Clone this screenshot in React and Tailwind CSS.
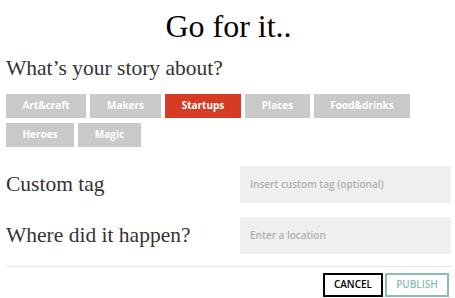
const TAGS_ROW1 = [
  { label: 'Art&craft', w: 'w-[80px]' },
  { label: 'Makers', w: 'w-[71px]' },
  { label: 'Startups', w: 'w-[76px]', active: true },
  { label: 'Places', w: 'w-[65px]' },
  { label: 'Food&drinks', w: 'w-[96px]' },
]

const TAGS_ROW2 = [
  { label: 'Heroes', w: 'w-[68px]' },
  { label: 'Magic', w: 'w-[63px]' },
]

const serif = "font-['Liberation_Serif',serif]"
const sans = "font-['Open_Sans',sans-serif]"

function Tag({ label, w, active }) {
  return (
    <button
      className={`${w} h-[24px] flex items-center justify-center text-[10px] font-bold text-white ${sans} ${
        active ? 'bg-[#d63b24]' : 'bg-[#c9c9c9]'
      }`}
    >
      {label}
    </button>
  )
}

function Field({ label, placeholder }) {
  return (
    <div className="flex items-center justify-between">
      <span className={`${serif} text-[21.5px] text-[#333]`}>{label}</span>
      <div
        className={`w-[211px] h-[37px] bg-[#efefef] flex items-center px-[10px] text-[10px] font-semibold text-[#b0b0b0] ${sans}`}
      >
        {placeholder}
      </div>
    </div>
  )
}

export default function App() {
  return (
    <div className="w-[455px] h-[298px] bg-white pl-[6px] pr-[4px] overflow-hidden">
      <h1 className={`${serif} text-[32px] text-black text-center leading-none pt-[10px]`}>
        Go for it..
      </h1>

      <h2 className={`${serif} text-[21.5px] text-[#333] mt-[16px] leading-none`}>
        What’s your story about?
      </h2>

      <div className="mt-[14px] flex flex-col gap-[5px]">
        <div className="flex gap-[4px]">
          {TAGS_ROW1.map((t) => (
            <Tag key={t.label} {...t} />
          ))}
        </div>
        <div className="flex gap-[4px]">
          {TAGS_ROW2.map((t) => (
            <Tag key={t.label} {...t} />
          ))}
        </div>
      </div>

      <div className="mt-[19px] flex flex-col gap-[14px]">
        <Field label="Custom tag" placeholder="Insert custom tag (optional)" />
        <Field label="Where did it happen?" placeholder="Enter a location" />
      </div>

      <div className="mt-[12px] border-t border-[#e3e3e3]" />

      <div className="mt-[6px] flex justify-end gap-[2px] pr-[2px]">
        <button
          className={`${sans} w-[60px] h-[24px] border-2 border-black text-[10px] font-semibold text-black`}
        >
          CANCEL
        </button>
        <button
          className={`${sans} w-[64px] h-[24px] border-2 border-[#8bbdb6] text-[10px] font-semibold text-[#8bbdb6]`}
        >
          PUBLISH
        </button>
      </div>
    </div>
  )
}
